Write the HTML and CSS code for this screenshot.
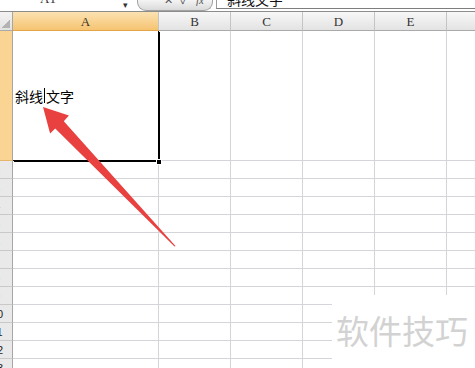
FILE: index.html
```html
<!DOCTYPE html>
<html lang="zh-CN">

<head>
    <meta charset="UTF-8">
    <title>斜线文字</title>
    <link rel="stylesheet" href="styles.css">
</head>

<body>
    <!-- 编辑栏 -->
    <div class="formula-bar">
        <div class="name-box"><span>A1</span><i class="drop">▾</i></div>
        <div class="bar-buttons"><span>✕</span><span>✓</span><span class="fx">fx</span></div>
        <div class="formula-input"><span>斜线文字</span></div>
    </div>

    <!-- 工作表 -->
    <div class="sheet">
        <div class="corner"><i></i></div>
        <div class="col-head active">A</div>
        <div class="col-head">B</div>
        <div class="col-head">C</div>
        <div class="col-head">D</div>
        <div class="col-head">E</div>
        <div class="col-head">F</div>

        <div class="row-head active"><span>1</span></div>
        <div class="cell a1">斜线<i class="caret"></i>文字<b class="fill-handle"></b></div>
        <div class="cell"></div><div class="cell"></div><div class="cell"></div><div class="cell"></div><div class="cell"></div>

        <div class="row-head"><span>2</span></div>
        <div class="cell"></div><div class="cell"></div><div class="cell"></div><div class="cell"></div><div class="cell"></div><div class="cell"></div>
        <div class="row-head"><span>3</span></div>
        <div class="cell"></div><div class="cell"></div><div class="cell"></div><div class="cell"></div><div class="cell"></div><div class="cell"></div>
        <div class="row-head"><span>4</span></div>
        <div class="cell"></div><div class="cell"></div><div class="cell"></div><div class="cell"></div><div class="cell"></div><div class="cell"></div>
        <div class="row-head"><span>5</span></div>
        <div class="cell"></div><div class="cell"></div><div class="cell"></div><div class="cell"></div><div class="cell"></div><div class="cell"></div>
        <div class="row-head"><span>6</span></div>
        <div class="cell"></div><div class="cell"></div><div class="cell"></div><div class="cell"></div><div class="cell"></div><div class="cell"></div>
        <div class="row-head"><span>7</span></div>
        <div class="cell"></div><div class="cell"></div><div class="cell"></div><div class="cell"></div><div class="cell"></div><div class="cell"></div>
        <div class="row-head"><span>8</span></div>
        <div class="cell"></div><div class="cell"></div><div class="cell"></div><div class="cell"></div><div class="cell"></div><div class="cell"></div>
        <div class="row-head"><span>9</span></div>
        <div class="cell"></div><div class="cell"></div><div class="cell"></div><div class="cell"></div><div class="cell"></div><div class="cell"></div>
        <div class="row-head"><span>10</span></div>
        <div class="cell"></div><div class="cell"></div><div class="cell"></div><div class="cell"></div><div class="cell"></div><div class="cell"></div>
        <div class="row-head"><span>11</span></div>
        <div class="cell"></div><div class="cell"></div><div class="cell"></div><div class="cell"></div><div class="cell"></div><div class="cell"></div>
        <div class="row-head"><span>12</span></div>
        <div class="cell"></div><div class="cell"></div><div class="cell"></div><div class="cell"></div><div class="cell"></div><div class="cell"></div>
        <div class="row-head"><span>13</span></div>
        <div class="cell"></div><div class="cell"></div><div class="cell"></div><div class="cell"></div><div class="cell"></div><div class="cell"></div>
    </div>

    <!-- 红色箭头 -->
    <svg class="arrow" width="475" height="368" viewBox="0 0 475 368">
        <polygon points="43,107 68.9,115.4 63.8,121.2 175.5,246 174.5,246.5 55.2,128.4 50.1,133.4" fill="#e8413f" />
    </svg>

    <!-- 水印 -->
    <div class="watermark">软件技巧</div>
</body>

</html>
```

FILE: styles.css
```css
:root {
    --grid: #d3d5d9;
    --head-line: #c4c4c4;
    --ink: #333333;
}

* {
    margin: 0;
    padding: 0;
    box-sizing: border-box;
}

body {
    width: 475px;
    height: 368px;
    overflow: hidden;
    position: relative;
    background: #fff;
    font-family: "Liberation Serif", "Noto Sans CJK SC", serif;
    color: var(--ink);
}

/* 编辑栏 */
.formula-bar {
    height: 12px;
    display: flex;
    overflow: hidden;
    background: #fff;
    border-bottom: 1px solid #8c8c8c;
}

.name-box {
    width: 128px;
    padding-left: 40px;
    display: flex;
    justify-content: space-between;
    font-size: 13px;
    line-height: 12px;
    margin-top: -7px;
}

.name-box .drop {
    font-style: normal;
    font-size: 9px;
    margin-top: 6px;
}

.bar-buttons {
    width: 76px;
    margin-left: 9px;
    height: 11px;
    display: flex;
    gap: 8px;
    justify-content: flex-end;
    padding-right: 8px;
    border: 1px solid #a2a2a2;
    border-top: none;
    border-radius: 0 0 9px 9px;
    background: linear-gradient(#f4f4f4, #dadada);
    font-size: 11px;
    line-height: 8px;
    color: #555;
}

.bar-buttons span {
    margin-top: -4px;
}

.bar-buttons .fx {
    font-style: italic;
}

.formula-input {
    flex: 1;
    margin-left: 3px;
    border-left: 1px solid #9c9c9c;
    border-bottom: 1px solid #7e7e7e;
    height: 9px;
    padding-left: 10px;
    font-family: "Noto Sans CJK SC", sans-serif;
    font-size: 14px;
    line-height: 14px;
    color: #111;
}

.formula-input span {
    display: block;
    margin-top: -8px;
}

/* 工作表 */
.sheet {
    display: grid;
    grid-template-columns: 13px 146px 72px 72px 72px 72px 72px;
    grid-template-rows: 19px 130px;
    grid-auto-rows: 18px;
}

.corner {
    display: flex;
    align-items: flex-end;
    justify-content: flex-end;
    padding: 0 2px 2px 0;
    background: linear-gradient(#f3f3f3, #e2e2e2);
    border-right: 1px solid #a6a6a6;
    border-bottom: 1px solid #aaaaaa;
}

.corner i {
    width: 9px;
    height: 9px;
    background: linear-gradient(to bottom right, transparent 50%, #b3b3b3 50%);
}

.col-head {
    background: linear-gradient(#f7f7f7, #e3e3e3);
    border-right: 1px solid var(--head-line);
    border-bottom: 1px solid #aaaaaa;
    text-align: center;
    font-size: 13px;
    line-height: 19px;
}

.col-head.active {
    background: linear-gradient(#fbe2b2, #f6c472);
    border-bottom: 1px solid #e3a548;
    color: #3d3422;
}

.row-head {
    overflow: hidden;
    background: #e9e9e9;
    border-right: 1px solid #a6a6a6;
    border-bottom: 1px solid #c9c9c9;
    font-family: "Liberation Sans", sans-serif;
    font-size: 11px;
    line-height: 18px;
    color: #222;
}

.row-head span {
    display: block;
    width: 28px;
    margin-left: -17px;
    text-align: center;
}

.row-head.active {
    background: #fad493;
    border-bottom-color: #e6b66c;
}

.row-head.active span {
    visibility: hidden;
}

.cell {
    border-right: 1px solid var(--grid);
    border-bottom: 1px solid var(--grid);
}

.cell.a1 {
    position: relative;
    z-index: 1;
    display: flex;
    align-items: center;
    padding-left: 2px;
    border-right-color: #000;
    border-bottom-color: #000;
    box-shadow: 1px 1px 0 #000;
    font-family: "Noto Sans CJK SC", sans-serif;
    font-size: 14px;
    color: #000;
}

.caret {
    display: inline-block;
    width: 1px;
    height: 15px;
    margin: 0 1px 0 1px;
    background: #000;
}

.fill-handle {
    position: absolute;
    right: -4px;
    bottom: -5px;
    width: 6px;
    height: 6px;
    background: #000;
    border: 1px solid #fff;
}

/* 覆盖层 */
.arrow {
    position: absolute;
    left: 0;
    top: 0;
    z-index: 2;
    pointer-events: none;
}

.watermark {
    position: absolute;
    left: 332px;
    top: 295px;
    width: 143px;
    height: 73px;
    z-index: 3;
    padding: 19px 0 0 4px;
    background: #fff;
    font-family: "Noto Sans CJK SC", sans-serif;
    font-size: 33px;
    line-height: 33px;
    color: #d2d2d2;
}
```
